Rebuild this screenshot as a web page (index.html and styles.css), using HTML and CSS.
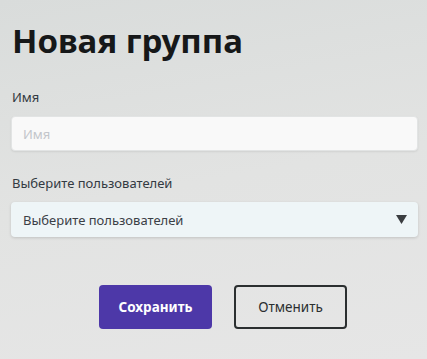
FILE: index.html
```html
<!DOCTYPE html>
<html lang="ru">
  <head>
    <meta charset="utf-8">
    <title>Новая группа</title>
    <link rel="stylesheet" href="styles.css">
  </head>
  <body>
    <div class="page">
      <h1 class="title">Новая группа</h1>
      <div class="field">
        <label class="label" for="name">Имя</label>
        <input class="input" id="name" type="text" placeholder="Имя">
      </div>
      <div class="field">
        <label class="label" for="users">Выберите пользователей</label>
        <div class="select" id="users">
          <span>Выберите пользователей</span>
          <svg class="arrow" width="11" height="9" viewBox="0 0 11 9"><polygon points="0,0 11,0 5.5,9" fill="#3a3d40"/></svg>
        </div>
      </div>
      <div class="actions">
        <button class="btn btn-primary">Сохранить</button>
        <button class="btn btn-outline">Отменить</button>
      </div>
    </div>
  </body>
</html>
```

FILE: styles.css
```css
html, body {
  margin: 0;
  padding: 0;
  height: 100%;
}
body {
  background: linear-gradient(170deg, #d9dcdb 0%, #e2e3e2 50%, #e6e6e6 100%);
  font-family: "Noto Sans", Roboto, sans-serif;
  color: #2a2d30;
  overflow: hidden;
}
.page {
  padding: 20px 9px 0 11px;
}
.title {
  margin: 0 0 0 1px;
  font-size: 33px;
  line-height: 42px;
  font-weight: 700;
  color: #161819;
}
.field {
  display: flex;
  flex-direction: column;
}
.field:first-of-type {
  margin-top: 27px;
}
.field + .field {
  margin-top: 24px;
}
.label {
  font-size: 13px;
  line-height: 16px;
  color: #333a42;
  margin: 0 0 11px 1px;
}
.input {
  box-sizing: border-box;
  height: 35px;
  border: 1px solid #e2e4e4;
  border-radius: 4px;
  background: #f9f9f9;
  padding: 0 11px;
  font-family: inherit;
  font-size: 13px;
  box-shadow: 0 1px 2px rgba(0,0,0,0.08);
}
.input::placeholder {
  color: #c3c6cb;
}
.select {
  box-sizing: border-box;
  height: 35px;
  border-radius: 4px;
  background: #eef5f7;
  padding: 0 11px 0 12px;
  display: flex;
  align-items: center;
  justify-content: space-between;
  font-size: 13px;
  color: #3b4046;
  box-shadow: 0 1px 3px rgba(0,0,0,0.15);
}
.arrow {
  display: block;
}
.actions {
  display: flex;
  justify-content: center;
  gap: 22px;
  margin-top: 48px;
  padding-left: 17px;
}
.btn {
  width: 113px;
  height: 44px;
  border-radius: 4px;
  font-family: inherit;
  font-size: 13.5px;
}
.btn-primary {
  background: #4d38a8;
  border: none;
  color: #ffffff;
  font-weight: 700;
}
.btn-outline {
  background: transparent;
  border: 2px solid #2b2f30;
  color: #2b2f30;
}
```
